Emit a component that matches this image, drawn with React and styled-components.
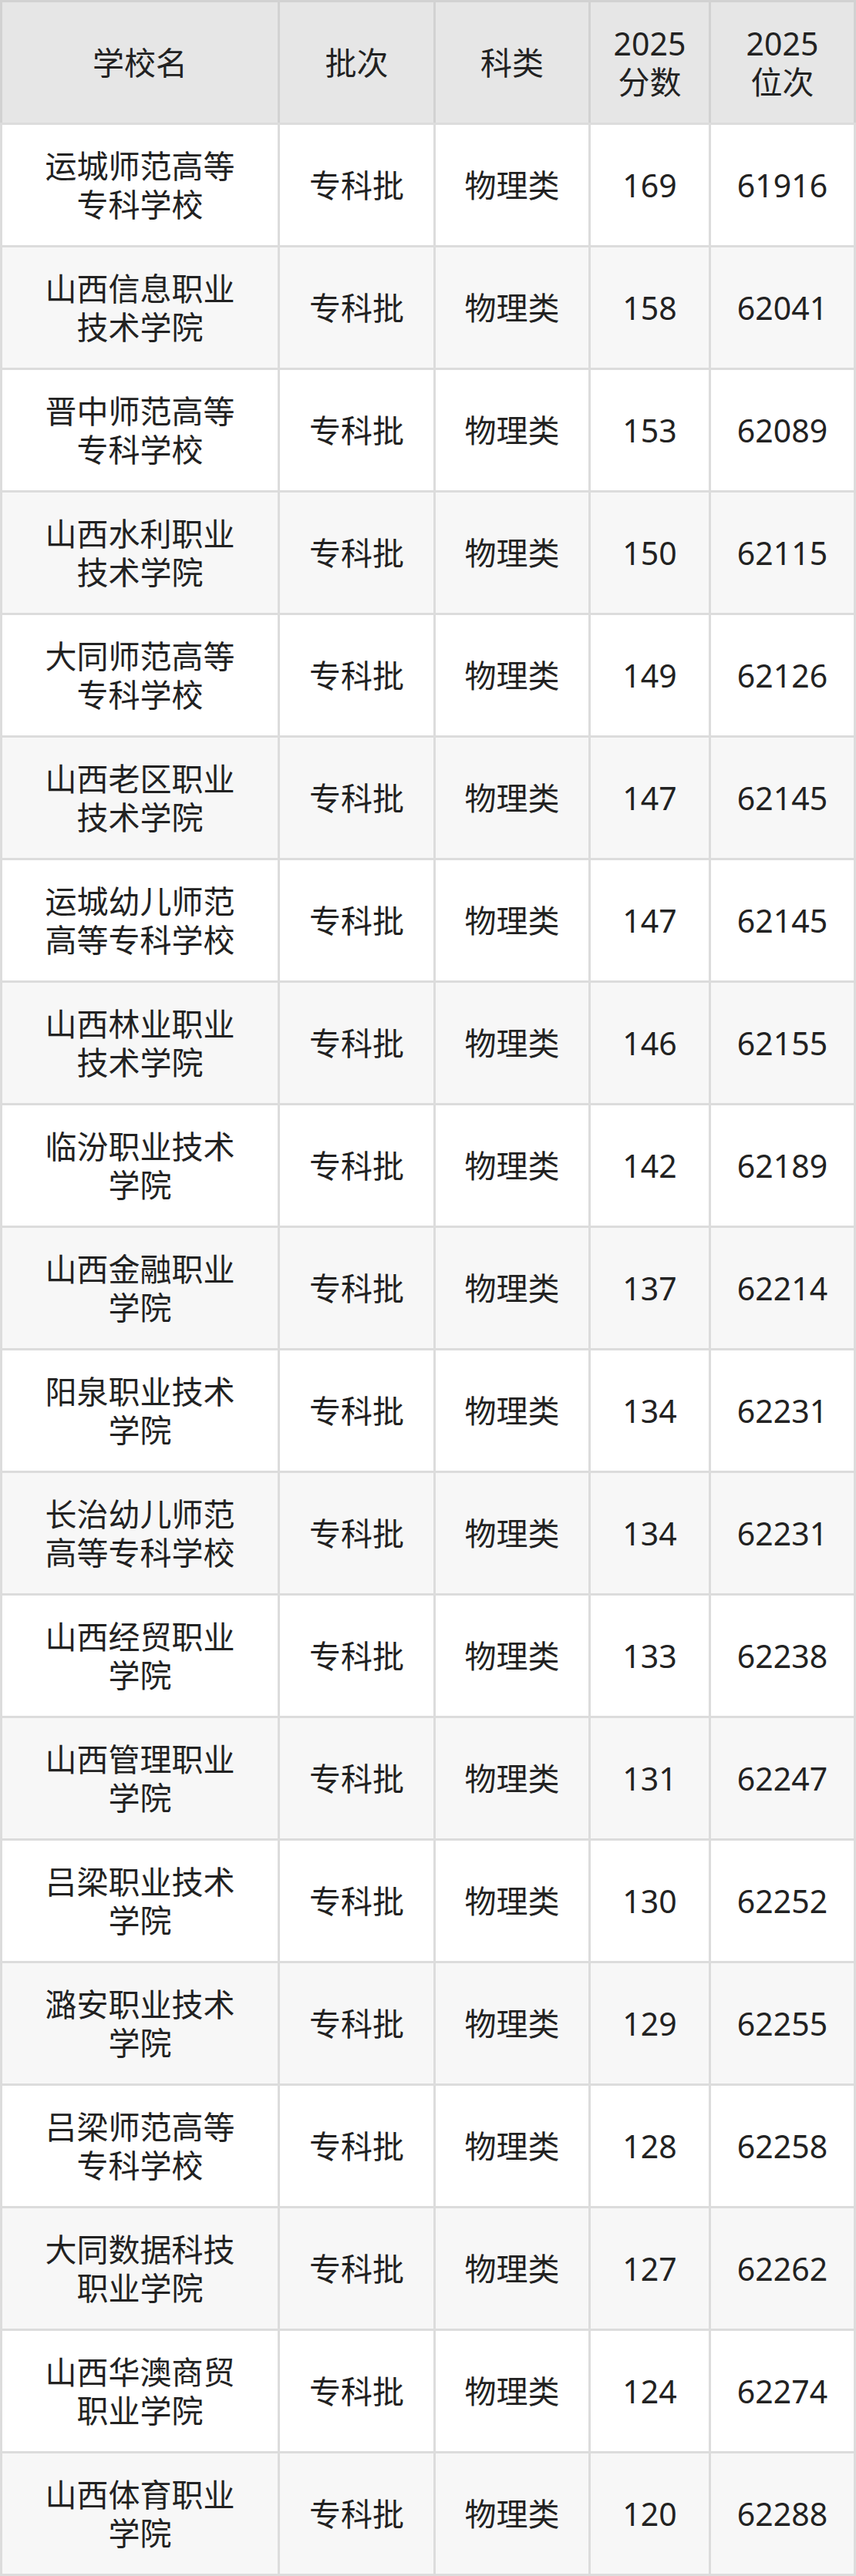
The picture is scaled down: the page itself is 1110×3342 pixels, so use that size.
import React from 'react';
import styled, {createGlobalStyle} from 'styled-components';

const rows = [
  ['运城师范高等专科学校', 169, 61916],
  ['山西信息职业技术学院', 158, 62041],
  ['晋中师范高等专科学校', 153, 62089],
  ['山西水利职业技术学院', 150, 62115],
  ['大同师范高等专科学校', 149, 62126],
  ['山西老区职业技术学院', 147, 62145],
  ['运城幼儿师范高等专科学校', 147, 62145],
  ['山西林业职业技术学院', 146, 62155],
  ['临汾职业技术学院', 142, 62189],
  ['山西金融职业学院', 137, 62214],
  ['阳泉职业技术学院', 134, 62231],
  ['长治幼儿师范高等专科学校', 134, 62231],
  ['山西经贸职业学院', 133, 62238],
  ['山西管理职业学院', 131, 62247],
  ['吕梁职业技术学院', 130, 62252],
  ['潞安职业技术学院', 129, 62255],
  ['吕梁师范高等专科学校', 128, 62258],
  ['大同数据科技职业学院', 127, 62262],
  ['山西华澳商贸职业学院', 124, 62274],
  ['山西体育职业学院', 120, 62288],
];

const headers = [['学校名'], ['批次'], ['科类'], ['2025', '分数'], ['2025', '位次']];

const App = () => {
  return (
    <>
      <GlobalStyle />
      <StTable>
        <StHeadRow>
          {headers.map((lines, i) => (
            <StHeadCell key={i}>
              {lines.map(line => (
                <span key={line}>{line}</span>
              ))}
            </StHeadCell>
          ))}
        </StHeadRow>
        {rows.map(([name, score, rank], index) => (
          <StRow key={name} $striped={index % 2 === 1}>
            <StCell $wide>{name}</StCell>
            <StCell>专科批</StCell>
            <StCell>物理类</StCell>
            <StCell>{score}</StCell>
            <StCell>{rank}</StCell>
          </StRow>
        ))}
      </StTable>
    </>
  );
};

export default App;

const GlobalStyle = createGlobalStyle`
  body {
    margin: 0;
    background: #ffffff;
    font-family: "Noto Sans", "Noto Sans CJK SC", sans-serif;
  }
`;

const StTable = styled.div`
  width: 1110px;
  display: flex;
  flex-direction: column;
  gap: 3px;
  padding: 3px 0;
  background: #dcdcdc;
  box-sizing: border-box;
`;

const StHeadRow = styled.div`
  display: grid;
  grid-template-columns: 357px 199px 198px 153px 185px;
  gap: 3px;
  padding: 0 3px;
  height: 156px;
  background: #d2d2d2;
  box-shadow: 0 -3px 0 #d2d2d2;
`;

const StRow = styled.div`
  display: grid;
  grid-template-columns: 357px 199px 198px 153px 185px;
  gap: 3px;
  padding: 0 3px;
  height: 156px;

  & > div {
    background: ${({$striped}) => ($striped ? '#f7f7f7' : '#ffffff')};
  }
`;

const StHeadCell = styled.div`
  display: flex;
  flex-direction: column;
  align-items: center;
  justify-content: center;
  background: #e6e6e6;
  color: #222222;
  font-size: 41px;
  line-height: 50px;
  text-align: center;
`;

const StCell = styled.div`
  display: flex;
  align-items: center;
  justify-content: center;
  padding: 0 ${({$wide}) => ($wide ? '38px' : '8px')};
  color: #222222;
  font-size: 41px;
  line-height: 50px;
  text-align: center;
`;
